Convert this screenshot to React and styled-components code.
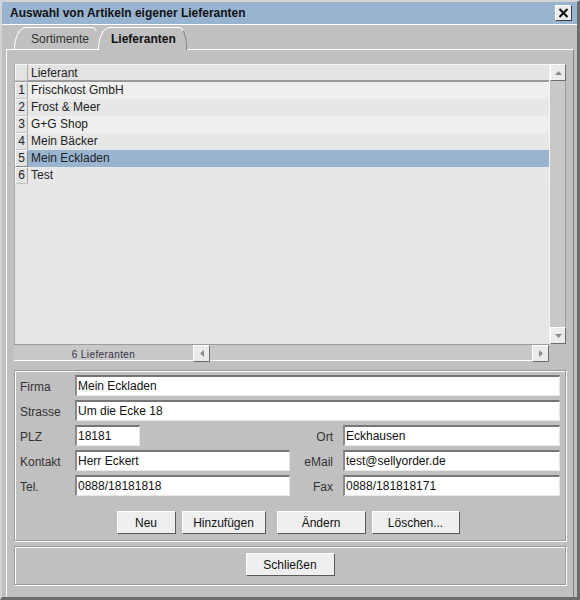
import React from "react";
import styled, { createGlobalStyle, css } from "styled-components";

const GlobalStyle = createGlobalStyle`
  html, body {
    margin: 0;
    padding: 0;
    background: #c0c0c0;
  }
  body {
    font-family: "Liberation Sans", Arial, sans-serif;
    font-size: 12px;
    color: #222;
  }
  * {
    box-sizing: border-box;
  }
`;

const raised = css`
  border-style: solid;
  border-width: 1px;
  border-color: #ffffff #6e6e6e #6e6e6e #ffffff;
`;

const Window = styled.div`
  width: 580px;
  height: 600px;
  background: #c0c0c0;
  border-left: 2px solid #d4d4d4;
  border-top: 2px solid #d4d4d4;
  border-right: 3px solid #6b6b6b;
  border-bottom: 3px solid #6b6b6b;
  display: flex;
  flex-direction: column;
`;

const TitleBar = styled.div`
  height: 23px;
  background: #99b4d1;
  border-bottom: 1px solid #ffffff;
  display: flex;
  align-items: center;
  justify-content: space-between;
  padding: 0 5px 0 8px;

  h1 {
    margin: 0;
    font-size: 12px;
    font-weight: bold;
    color: #111;
  }
`;

const CloseButton = styled.button`
  ${raised};
  width: 17px;
  height: 16px;
  padding: 0;
  background: #ececec;
  display: flex;
  align-items: center;
  justify-content: center;
  border-right-color: #404040;
  border-bottom-color: #404040;
`;

const Body = styled.div`
  flex: 1;
  display: flex;
  flex-direction: column;
  padding: 0 3px 0 4px;
`;

const TabRow = styled.div`
  display: flex;
  height: 24px;
  padding: 2px 0 0 8px;
  align-items: flex-end;
`;

const Tab = styled.div`
  position: relative;
  padding: 4px 10px 0 ${(p) => (p.$active ? "12px" : "16px")};
  margin-left: ${(p) => (p.$active ? "-2px" : "0")};
  font-weight: ${(p) => (p.$active ? "bold" : "normal")};
  color: ${(p) => (p.$active ? "#111" : "#333")};
  background: #c0c0c0;
  border-top: 1px solid #ffffff;
  border-left: 1px solid #ffffff;
  border-right: 1px solid ${(p) => (p.$active ? "#808080" : "transparent")};
  border-radius: 12px 8px 0 0 / 22px 20px 0 0;
  z-index: ${(p) => (p.$active ? 2 : 1)};
  margin-bottom: ${(p) => (p.$active ? "-1px" : "0")};
  height: ${(p) => (p.$active ? "23px" : "22px")};
`;

const TabPanel = styled.div`
  border-top: 1px solid #ffffff;
  border-left: 1px solid #ffffff;
  border-right: 1px solid #808080;
  padding: 14px 7px 4px 7px;
  display: flex;
  flex-direction: column;
`;

const ListArea = styled.div`
  display: grid;
  grid-template-columns: 1fr 17px;
  grid-template-rows: 280px 17px;
`;

const Table = styled.div`
  background: #e6e6e6;
  border-left: 1px solid #a8a8a8;
  overflow: hidden;
`;

const Row = styled.div`
  display: grid;
  grid-template-columns: 13px 1fr;
  background: ${(p) =>
    p.$header ? "#e3e3e3" : p.$selected ? "#99b4d1" : p.$odd ? "#efefef" : "#e7e7e7"};
  border-bottom: ${(p) => (p.$header ? "2px solid #9a9a9a" : "0")};
  height: ${(p) => (p.$header ? "18px" : "17px")};
`;

const NumCell = styled.div`
  background: #e3e3e3;
  border-style: solid;
  border-width: 1px;
  border-color: ${(p) =>
    p.$selected ? "#ffffff #8a8a8a #8a8a8a #ffffff" : "#f6f6f6 #a8a8a8 #c6c6c6 #f6f6f6"};
  font-size: 12px;
  line-height: 15px;
  text-align: center;
  color: #222;
`;

const Cell = styled.div`
  padding-left: 3px;
  line-height: 17px;
  color: #222;
  ${(p) =>
    p.$header &&
    css`
      border-top: 1px solid #f6f6f6;
      line-height: 16px;
    `}
`;

const VScroll = styled.div`
  background: #c8c8c8;
  border-left: 1px solid #f4f4f4;
  border-right: 1px solid #9c9c9c;
  display: flex;
  flex-direction: column;
  justify-content: space-between;
`;

const ArrowButton = styled.div`
  ${raised};
  width: ${(p) => p.$w || "17px"};
  height: 17px;
  flex: none;
  background: #ebebeb;
  display: flex;
  align-items: center;
  justify-content: center;
`;

const HBar = styled.div`
  display: flex;
  border-top: 1px solid #9c9c9c;
`;

const Status = styled.div`
  width: 179px;
  background: #c8c8c8;
  border-bottom: 1px solid #ffffff;
  text-align: center;
  font-size: 10px;
  letter-spacing: 0.4px;
  color: #333344;
  line-height: 16px;
  padding-top: 2px;
`;

const HTrack = styled.div`
  flex: 1;
  background: #c8c8c8;
  border-bottom: 1px solid #ffffff;
`;

const GroupBox = styled.div`
  border: 1px solid #9a9a9a;
  box-shadow: inset 1px 1px 0 #ffffff, 1px 1px 0 #ffffff;
  margin-top: ${(p) => p.$mt || "0"};
  padding: ${(p) => p.$pad};
  display: flex;
  flex-direction: column;
  align-items: ${(p) => (p.$center ? "center" : "stretch")};
`;

const FormGrid = styled.div`
  display: grid;
  grid-template-columns: 55px 215px 53px 217px;
  grid-auto-rows: 21px;
  row-gap: 4px;
  align-items: center;
`;

const Label = styled.label`
  color: #333;
  font-size: 12px;
  text-align: ${(p) => (p.$right ? "right" : "left")};
  padding-right: ${(p) => (p.$right ? "10px" : "0")};
  padding-top: 2px;
`;

const Input = styled.input`
  font-family: "Liberation Sans", Arial, sans-serif;
  font-size: 12px;
  color: #111;
  height: 21px;
  width: ${(p) => p.$w || "100%"};
  grid-column: ${(p) => p.$span || "auto"};
  background: #ffffff;
  border-style: solid;
  border-width: 2px 1px 1px 2px;
  border-color: #767676 #e8e8e8 #e8e8e8 #8a8a8a;
  padding: 0 0 0 1px;
  outline: none;
`;

const ButtonRow = styled.div`
  display: flex;
  justify-content: center;
  gap: 6px;
  margin-top: 15px;
  padding-right: 4px;
`;

const Button = styled.button`
  ${raised};
  border-right-color: #5a5a5a;
  border-bottom-color: #5a5a5a;
  width: ${(p) => p.$w};
  height: 23px;
  background: #efefef;
  font-family: "Liberation Sans", Arial, sans-serif;
  font-size: 12px;
  color: #111;
  padding: 0;
  margin-left: ${(p) => p.$ml || "0"};
`;

const Footer = styled.div`
  border-left: 1px solid #ffffff;
  border-right: 1px solid #808080;
  padding: 1px 7px 0 7px;
  flex: 1;
`;

const Arrow = ({ dir }) => {
  const pts = {
    up: "0,4 3.5,0 7,4",
    down: "0,0 3.5,4 7,0",
    left: "4,0 0,3.5 4,7",
    right: "0,0 4,3.5 0,7",
  }[dir];
  const vertical = dir === "up" || dir === "down";
  return (
    <svg width={vertical ? 7 : 4} height={vertical ? 4 : 7} viewBox={vertical ? "0 0 7 4" : "0 0 4 7"}>
      <polygon points={pts} fill="#8c8c8c" />
    </svg>
  );
};

const suppliers = ["Frischkost GmbH", "Frost & Meer", "G+G Shop", "Mein Bäcker", "Mein Eckladen", "Test"];

export default function App() {
  return (
    <>
      <GlobalStyle />
      <Window>
        <TitleBar>
          <h1>Auswahl von Artikeln eigener Lieferanten</h1>
          <CloseButton aria-label="Schließen">
            <svg width="11" height="10" viewBox="0 0 11 10">
              <path d="M1.5 1 L9.5 9 M9.5 1 L1.5 9" stroke="#111" strokeWidth="2" />
            </svg>
          </CloseButton>
        </TitleBar>
        <Body>
          <TabRow>
            <Tab>Sortimente</Tab>
            <Tab $active>Lieferanten</Tab>
          </TabRow>
          <TabPanel>
            <ListArea>
              <Table>
                <Row $header>
                  <NumCell />
                  <Cell $header>Lieferant</Cell>
                </Row>
                {suppliers.map((s, i) => (
                  <Row key={s} $odd={i % 2 === 0} $selected={i === 4}>
                    <NumCell $selected={i === 4}>{i + 1}</NumCell>
                    <Cell>{s}</Cell>
                  </Row>
                ))}
              </Table>
              <VScroll>
                <ArrowButton $w="16px">
                  <Arrow dir="up" />
                </ArrowButton>
                <ArrowButton $w="16px">
                  <Arrow dir="down" />
                </ArrowButton>
              </VScroll>
              <HBar>
                <Status>6 Lieferanten</Status>
                <ArrowButton>
                  <Arrow dir="left" />
                </ArrowButton>
                <HTrack />
                <ArrowButton>
                  <Arrow dir="right" />
                </ArrowButton>
              </HBar>
            </ListArea>
            <GroupBox $mt="9px" $pad="4px 5px 6px 5px">
              <FormGrid>
                <Label>Firma</Label>
                <Input $span="2 / 5" defaultValue="Mein Eckladen" />
                <Label>Strasse</Label>
                <Input $span="2 / 5" defaultValue="Um die Ecke 18" />
                <Label>PLZ</Label>
                <Input $w="65px" defaultValue="18181" />
                <Label $right>Ort</Label>
                <Input defaultValue="Eckhausen" />
                <Label>Kontakt</Label>
                <Input defaultValue="Herr Eckert" />
                <Label $right>eMail</Label>
                <Input defaultValue="test@sellyorder.de" />
                <Label>Tel.</Label>
                <Input defaultValue="0888/18181818" />
                <Label $right>Fax</Label>
                <Input defaultValue="0888/181818171" />
              </FormGrid>
              <ButtonRow>
                <Button $w="59px">Neu</Button>
                <Button $w="84px">Hinzufügen</Button>
                <Button $w="89px" $ml="5px">
                  Ändern
                </Button>
                <Button $w="88px">Löschen...</Button>
              </ButtonRow>
            </GroupBox>
          </TabPanel>
          <Footer>
            <GroupBox $pad="6px 0 8px 0" $center>
              <Button $w="89px">Schließen</Button>
            </GroupBox>
          </Footer>
        </Body>
      </Window>
    </>
  );
}
